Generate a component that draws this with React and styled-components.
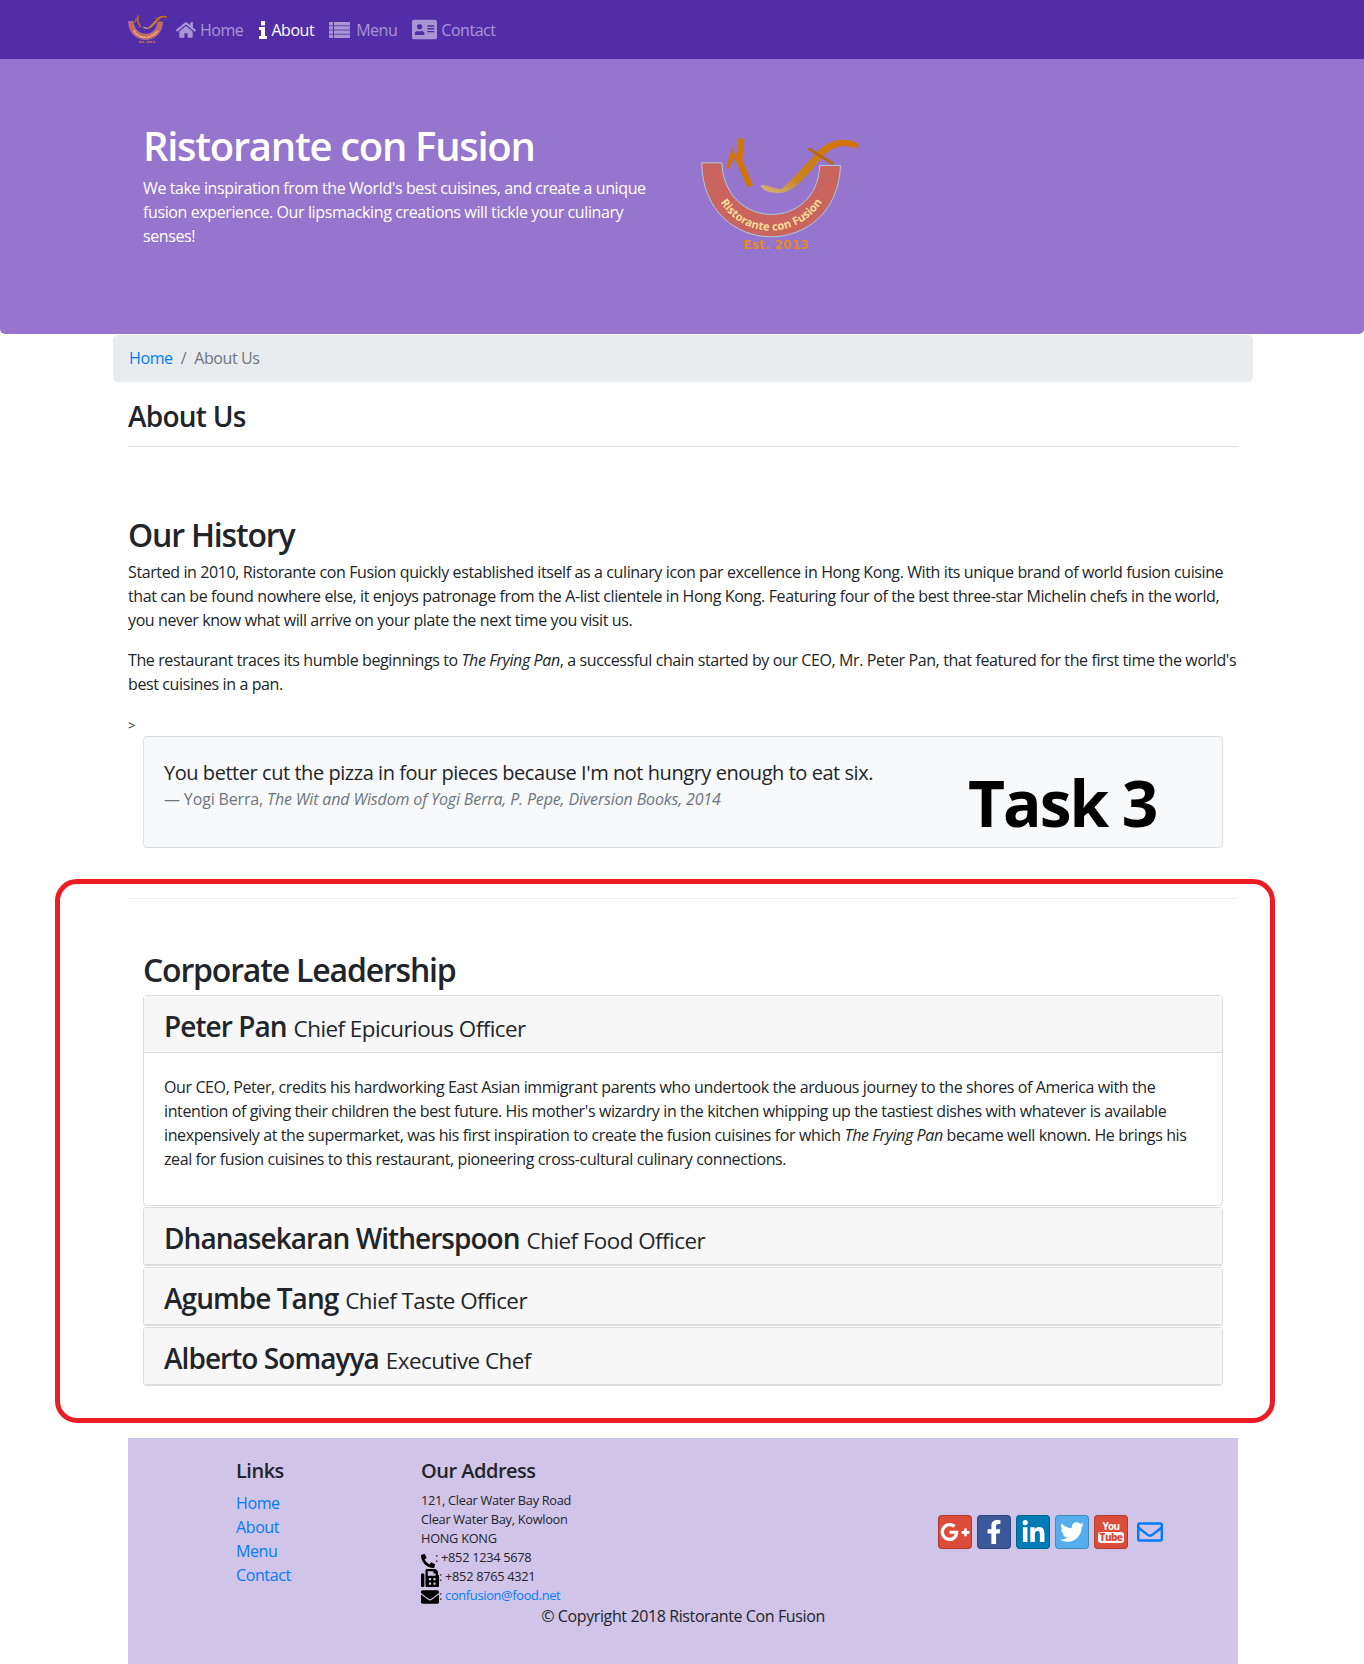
import React from 'react';
import styled, { createGlobalStyle } from 'styled-components';
import {
    FaHome,
    FaAddressCard,
    FaPhoneAlt,
    FaFax,
    FaEnvelope,
    FaRegEnvelope,
    FaGooglePlusG,
    FaFacebookF,
    FaLinkedinIn,
    FaTwitter,
} from 'react-icons/fa';

const GlobalStyle = createGlobalStyle`
    body {
        margin: 0;
        font-family: "Open Sans", "Noto Sans", "Liberation Sans", sans-serif;
        font-size: 16px;
        line-height: 24px;
        letter-spacing: -0.39px;
        color: #212529;
        background: #fff;
    }
    * {
        box-sizing: border-box;
    }
    a {
        color: #007bff;
        text-decoration: none;
    }
`;

const Page = styled.div`
    position: relative;
    width: 1364px;
    height: 1664px;
    overflow: hidden;
`;

const Navbar = styled.nav`
    display: flex;
    align-items: center;
    height: 59px;
    padding-left: 128px;
    background: #512da8;
`;

const NavItem = styled.a`
    display: flex;
    align-items: center;
    gap: ${(props) => props.$gap || 4}px;
    margin-left: ${(props) => props.$left}px;
    letter-spacing: -0.46px;
    color: ${(props) => (props.$active ? '#fff' : 'rgba(255, 255, 255, 0.5)')};
    svg {
        display: block;
    }
`;

const Jumbotron = styled.header`
    display: flex;
    height: 275px;
    padding: 63px 0 0 143px;
    background: #9575cd;
    border-radius: 0 0 5px 5px;
    color: #fff;
`;

const JumboText = styled.div`
    width: 510px;
    h1 {
        margin: 0 0 6px;
        font-size: 40px;
        line-height: 48px;
        font-weight: 600;
        letter-spacing: -1.3px;
    }
    p {
        margin: 0;
    }
`;

const JumboLogo = styled.div`
    margin: 15px 0 0 47px;
`;

const Container = styled.main`
    width: 1140px;
    margin: 1px 0 0 113px;
`;

const Breadcrumb = styled.ol`
    display: flex;
    gap: 8px;
    height: 47px;
    margin: 0;
    padding: 11px 16px;
    list-style: none;
    background: #e9ecef;
    border-radius: 5px;
    color: #6c757d;
`;

const Content = styled.div`
    padding: 0 15px;
`;

const PageTitle = styled.h3`
    margin: 17px 0 0;
    padding-bottom: 13px;
    font-size: 28px;
    line-height: 34px;
    font-weight: 600;
    letter-spacing: -0.75px;
    border-bottom: 1px solid #dee2e6;
`;

const SectionTitle = styled.h2`
    margin: ${(props) => props.$top}px 0 6px;
    padding-left: ${(props) => props.$indent || 0}px;
    font-size: 32px;
    line-height: 38px;
    font-weight: 600;
    letter-spacing: -1.18px;
`;

const Paragraph = styled.p`
    margin: 0 0 16px;
`;

const Stray = styled.div`
    margin-top: 17px;
    height: 23px;
    font-size: 13px;
`;

const Quote = styled.blockquote`
    height: 112px;
    margin: 0 15px;
    padding: 21px 20px;
    background: #f8f9fa;
    border: 1px solid #dfdfdf;
    border-radius: 4px;
    p {
        margin: 0;
        font-size: 20px;
        line-height: 29px;
        letter-spacing: -0.45px;
    }
    footer {
        font-size: 16px;
        line-height: 24px;
        letter-spacing: -0.15px;
        color: #6c757d;
    }
`;

const Divider = styled.hr`
    margin: 50px 0 0;
    border: 0;
    border-top: 1px solid #ececec;
`;

const Leaders = styled.section`
    margin: 0 15px;
`;

const LeaderCard = styled.article`
    margin-bottom: 1px;
    background: #fff;
    border: 1px solid #dcdcdc;
    border-bottom-width: ${(props) => (props.$open ? 1 : 2)}px;
    border-radius: 4px;
`;

const LeaderHeader = styled.h3`
    display: flex;
    align-items: baseline;
    gap: 7px;
    height: ${(props) => (props.$open ? 57 : 56)}px;
    margin: 0;
    padding: 13px 20px 0;
    background: #f7f7f7;
    font-size: 28px;
    line-height: 34px;
    font-weight: 600;
    letter-spacing: -0.95px;
    border-bottom: ${(props) => (props.$open ? '1px solid #dcdcdc' : '0')};
    small {
        font-size: 22.4px;
        font-weight: 400;
        letter-spacing: -0.53px;
    }
`;

const LeaderBody = styled.div`
    padding: 22px 20px 0;
    height: 152px;
`;

const Footer = styled.footer`
    height: 240px;
    margin-top: 52px;
    padding-top: 18px;
    background: #d1c4e9;
    border-top: 1px solid #cbbde3;
`;

const FooterRow = styled.div`
    display: flex;
    padding: 0 75px 0 108px;
`;

const LinksCol = styled.div`
    width: 185px;
    ul {
        margin: 0;
        padding: 0;
        list-style: none;
    }
`;

const AddressCol = styled.div`
    width: 400px;
`;

const FooterHeading = styled.h5`
    margin: 0 0 6px;
    font-size: 20px;
    line-height: 28px;
    font-weight: 600;
    letter-spacing: -0.5px;
`;

const Address = styled.address`
    margin: 0;
    font-style: normal;
    font-size: 12.8px;
    line-height: 19px;
    letter-spacing: -0.3px;
    svg {
        display: inline-block;
        margin: -4px 0;
        vertical-align: -2px;
        color: #000;
    }
`;

const SocialCol = styled.div`
    display: flex;
    align-items: center;
    gap: 5px;
    margin: 58px 0 0 auto;
    height: 34px;
`;

const SocialButton = styled.a`
    display: flex;
    align-items: center;
    justify-content: center;
    width: 34px;
    height: 34px;
    border-radius: 4px;
    border: 1px solid rgba(0, 0, 0, 0.2);
    background: ${(props) => props.$bg};
    color: #fff;
    font-size: ${(props) => props.$size || 22}px;
`;

const YoutubeMark = styled.span`
    display: flex;
    flex-direction: column;
    align-items: center;
    font-size: 10px;
    line-height: 11px;
    font-weight: 700;
    letter-spacing: -0.6px;
    b {
        padding: 0 2px;
        background: #fff;
        color: #dd4b39;
        border-radius: 3px;
    }
`;

const MailIcon = styled.a`
    display: flex;
    margin-left: 4px;
    font-size: 26px;
    color: #007bff;
`;

const Copyright = styled.div`
    margin-top: -1px;
    text-align: center;
`;

// the two things drawn over the screenshot afterwards
const TaskLabel = styled.div`
    position: absolute;
    left: 968px;
    top: 763px;
    font-size: 64px;
    line-height: 80px;
    font-weight: 700;
    letter-spacing: -2px;
    color: #000;
`;

const Highlight = styled.div`
    position: absolute;
    left: 55px;
    top: 879px;
    width: 1220px;
    height: 544px;
    border: 5px solid #ed1c24;
    border-radius: 22px;
    pointer-events: none;
`;

function InfoIcon() {
    return (
        <svg width="8" height="18" viewBox="0 0 8 18" fill="currentColor" aria-hidden="true">
            <path d="M2 0h4v4.4H2zM0 6h6v9h2v3H0v-3h2v-6H0z" />
        </svg>
    );
}

function ListIcon() {
    const rows = [0, 4.2, 8.4, 12.6];
    return (
        <svg width="21" height="16" viewBox="0 0 21 16" fill="currentColor" aria-hidden="true">
            {rows.map((y) => (
                <g key={y}>
                    <rect x="0" y={y} width="4" height="3.4" />
                    <rect x="5" y={y} width="16" height="3.4" />
                </g>
            ))}
        </svg>
    );
}

function Logo({ width, id }) {
    return (
        <svg width={width} viewBox="90 50 490 350" aria-hidden="true">
            <defs>
                <linearGradient id={`spoon-${id}`} x1="0" y1="1" x2="1" y2="0">
                    <stop offset="0" stopColor="#d8b48a" />
                    <stop offset="0.3" stopColor="#c9861f" />
                    <stop offset="1" stopColor="#d66f00" />
                </linearGradient>
                <path id={`arc-${id}`} d="M122 170 C165 388 440 388 492 170" />
            </defs>
            <path
                d="M95 128 L156 128 C165 335 445 335 452 136 L515 136 C505 425 100 425 95 128 Z"
                fill="#c9645f"
                stroke="#a9cbe4"
                strokeWidth="3"
            />
            <text fontFamily="Open Sans, sans-serif" fontSize="34" fontWeight="700" fill="#f6dd96" letterSpacing="0">
                <textPath href={`#arc-${id}`} startOffset="50%" textAnchor="middle">
                    Ristorante con Fusion
                </textPath>
            </text>
            <path
                d="M172 140 L188 88 L200 120 L208 55 L222 60 L216 120 L248 195 L234 200 L205 130 L192 108 L178 145 Z"
                fill="#d17406"
                stroke="#d17406"
                strokeWidth="4"
            />
            <path
                d="M273 197 C285 190 310 205 335 208 C370 180 420 120 455 85 C490 55 540 50 570 72 L562 85 C520 68 490 80 460 110 C420 160 385 205 345 218 C310 222 280 215 273 197 Z"
                fill={`url(#spoon-${id})`}
            />
            <path d="M415 88 L422 82 L496 128 L490 135 Z" fill="#b8690e" />
            <text
                x="320"
                y="388"
                textAnchor="middle"
                fontFamily="DejaVu Sans, sans-serif"
                fontSize="36"
                fontWeight="700"
                fill="#e58a1c"
                letterSpacing="1"
            >
                Est. 2013
            </text>
        </svg>
    );
}

const leaders = [
    { name: 'Dhanasekaran Witherspoon', title: 'Chief Food Officer' },
    { name: 'Agumbe Tang', title: 'Chief Taste Officer' },
    { name: 'Alberto Somayya', title: 'Executive Chef' },
];

function App() {
    return (
        <Page>
            <GlobalStyle />
            <Navbar>
                <Logo width={40} id="nav" />
                <NavItem href="#" $left={8} $gap={4}>
                    <FaHome size={20} /> Home
                </NavItem>
                <NavItem href="#" $left={16} $active $gap={4}>
                    <InfoIcon /> About
                </NavItem>
                <NavItem href="#" $left={15} $gap={6}>
                    <ListIcon /> Menu
                </NavItem>
                <NavItem href="#" $left={15} $gap={4}>
                    <FaAddressCard size={25} /> Contact
                </NavItem>
            </Navbar>
            <Jumbotron>
                <JumboText>
                    <h1>Ristorante con Fusion</h1>
                    <p>
                        We take inspiration from the World's best cuisines, and create a unique
                        fusion experience. Our lipsmacking creations will tickle your culinary
                        senses!
                    </p>
                </JumboText>
                <JumboLogo>
                    <Logo width={162} id="hero" />
                </JumboLogo>
            </Jumbotron>
            <Container>
                <Breadcrumb>
                    <li>
                        <a href="#">Home</a>
                    </li>
                    <li>/</li>
                    <li>About Us</li>
                </Breadcrumb>
                <Content>
                    <PageTitle>About Us</PageTitle>
                    <SectionTitle $top={69}>Our History</SectionTitle>
                    <Paragraph>
                        Started in 2010, Ristorante con Fusion quickly established itself as a
                        culinary icon par excellence in Hong Kong. With its unique brand of world
                        fusion cuisine that can be found nowhere else, it enjoys patronage from the
                        A-list clientele in Hong Kong. Featuring four of the best three-star
                        Michelin chefs in the world, you never know what will arrive on your plate
                        the next time you visit us.
                    </Paragraph>
                    <Paragraph>
                        The restaurant traces its humble beginnings to <em>The Frying Pan</em>, a
                        successful chain started by our CEO, Mr. Peter Pan, that featured for the
                        first time the world's best cuisines in a pan.
                    </Paragraph>
                    <Stray>&gt;</Stray>
                    <Quote>
                        <p>You better cut the pizza in four pieces because I'm not hungry enough to eat six.</p>
                        <footer>
                            — Yogi Berra, <em>The Wit and Wisdom of Yogi Berra, P. Pepe, Diversion Books, 2014</em>
                        </footer>
                    </Quote>
                    <Divider />
                    <SectionTitle $top={52} $indent={15}>
                        Corporate Leadership
                    </SectionTitle>
                    <Leaders>
                        <LeaderCard $open>
                            <LeaderHeader $open>
                                Peter Pan <small>Chief Epicurious Officer</small>
                            </LeaderHeader>
                            <LeaderBody>
                                Our CEO, Peter, credits his hardworking East Asian immigrant parents
                                who undertook the arduous journey to the shores of America with the
                                intention of giving their children the best future. His mother's
                                wizardry in the kitchen whipping up the tastiest dishes with whatever
                                is available inexpensively at the supermarket, was his first
                                inspiration to create the fusion cuisines for which{' '}
                                <em>The Frying Pan</em> became well known. He brings his zeal for
                                fusion cuisines to this restaurant, pioneering cross-cultural culinary
                                connections.
                            </LeaderBody>
                        </LeaderCard>
                        {leaders.map((leader) => (
                            <LeaderCard key={leader.name}>
                                <LeaderHeader>
                                    {leader.name} <small>{leader.title}</small>
                                </LeaderHeader>
                            </LeaderCard>
                        ))}
                    </Leaders>
                    <Footer>
                        <FooterRow>
                            <LinksCol>
                                <FooterHeading>Links</FooterHeading>
                                <ul>
                                    <li><a href="#">Home</a></li>
                                    <li><a href="#">About</a></li>
                                    <li><a href="#">Menu</a></li>
                                    <li><a href="#">Contact</a></li>
                                </ul>
                            </LinksCol>
                            <AddressCol>
                                <FooterHeading>Our Address</FooterHeading>
                                <Address>
                                    121, Clear Water Bay Road<br />
                                    Clear Water Bay, Kowloon<br />
                                    HONG KONG<br />
                                    <FaPhoneAlt size={14} />: +852 1234 5678<br />
                                    <FaFax size={18} />: +852 8765 4321<br />
                                    <FaEnvelope size={18} />: <a href="#">confusion@food.net</a>
                                </Address>
                            </AddressCol>
                            <SocialCol>
                                <SocialButton href="#" $bg="#dd4b39" $size={30}><FaGooglePlusG /></SocialButton>
                                <SocialButton href="#" $bg="#3b5998" $size={24}><FaFacebookF /></SocialButton>
                                <SocialButton href="#" $bg="#007bb6" $size={25}><FaLinkedinIn /></SocialButton>
                                <SocialButton href="#" $bg="#55acee" $size={24}><FaTwitter /></SocialButton>
                                <SocialButton href="#" $bg="#dd4b39">
                                    <YoutubeMark>You<b>Tube</b></YoutubeMark>
                                </SocialButton>
                                <MailIcon href="#"><FaRegEnvelope /></MailIcon>
                            </SocialCol>
                        </FooterRow>
                        <Copyright>© Copyright 2018 Ristorante Con Fusion</Copyright>
                    </Footer>
                </Content>
            </Container>
            <TaskLabel>Task 3</TaskLabel>
            <Highlight />
        </Page>
    );
}

export default App;
